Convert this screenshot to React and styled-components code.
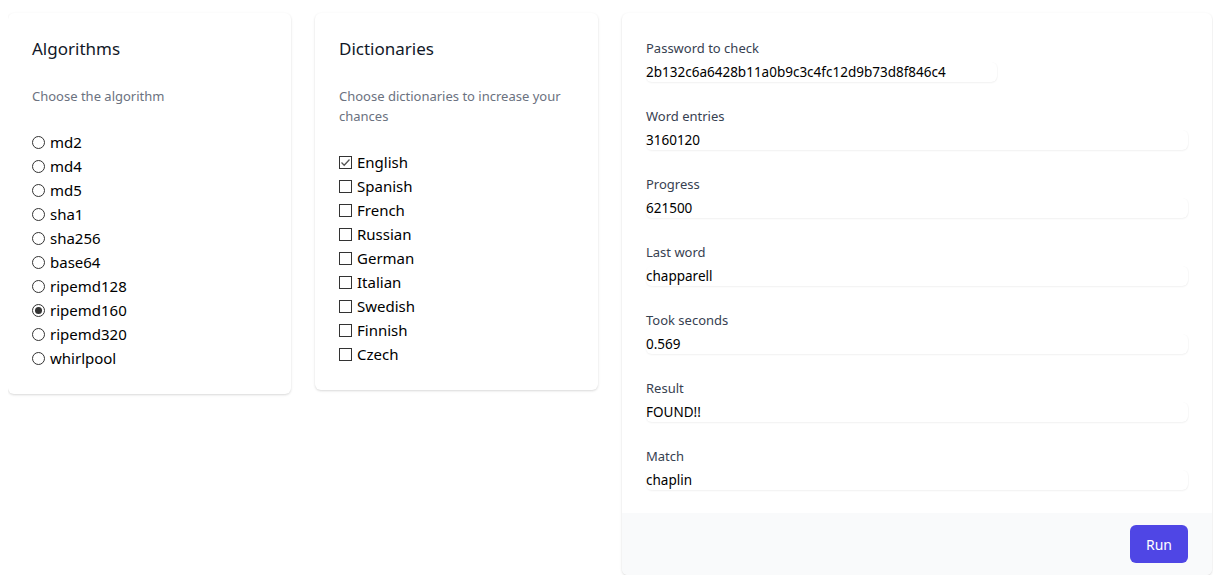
import styled, { createGlobalStyle } from "styled-components";

const GlobalStyle = createGlobalStyle`
  body {
    margin: 8px;
    font-family: "Noto Sans", "Open Sans", sans-serif;
    color: #111827;
    background: #fff;
  }
`;

// 三列布局：两张窄卡片 + 一张宽的结果卡片
const Layout = styled.div`
  display: grid;
  grid-template-columns: 283px 283px 590px;
  column-gap: 24px;
  align-items: start;
  padding-top: 5px;
`;

const Card = styled.section`
  background: #fff;
  border-radius: 6px;
  box-shadow: 0 1px 3px 0 rgba(0, 0, 0, 0.1), 0 1px 2px 0 rgba(0, 0, 0, 0.06);
  overflow: hidden;
`;

const CardBody = styled.div`
  padding: ${(p) => p.$padding || "24px"};
`;

const Title = styled.h3`
  margin: 0;
  font-size: 17px;
  line-height: 24px;
  font-weight: 400;
  color: #111827;
`;

const Hint = styled.p`
  margin: 25px 0 0;
  font-size: 13px;
  line-height: 20px;
  color: #6b7280;
`;

const OptionList = styled.div`
  margin-top: 24px;
  display: flex;
  flex-direction: column;
`;

const Option = styled.label`
  display: flex;
  align-items: center;
  gap: 5px;
  font-size: 15px;
  line-height: 24px;
  color: #000;
`;

const RadioMark = styled.span`
  box-sizing: border-box;
  width: 13px;
  height: 13px;
  border: 1px solid #333;
  border-radius: 50%;
  display: flex;
  align-items: center;
  justify-content: center;
  flex: none;

  &::after {
    content: "";
    width: 7px;
    height: 7px;
    border-radius: 50%;
    background: ${(p) => (p.$checked ? "#333" : "transparent")};
  }
`;

const CheckMark = styled.span`
  box-sizing: border-box;
  width: 13px;
  height: 13px;
  border: 1px solid #333;
  display: flex;
  align-items: center;
  justify-content: center;
  flex: none;
`;

const Fields = styled.div`
  display: flex;
  flex-direction: column;
  gap: 24px;
`;

const Field = styled.div`
  display: flex;
  flex-direction: column;
`;

const FieldLabel = styled.label`
  font-size: 13px;
  line-height: 20px;
  color: #374151;
  margin-bottom: 4px;
`;

const Value = styled.input`
  box-sizing: border-box;
  width: ${(p) => p.$width || "100%"};
  height: 20px;
  padding: 0;
  border: none;
  outline: none;
  border-radius: 6px;
  font: inherit;
  font-size: 13.5px;
  color: #000;
  background: #fff;
  box-shadow: 0 1px 2px 0 rgba(0, 0, 0, 0.06), 1px 0 1px 0 rgba(0, 0, 0, 0.02);
`;

const Footer = styled.footer`
  background: #f9fafb;
  padding: 12px 24px;
  display: flex;
  justify-content: flex-end;
`;

const RunButton = styled.button`
  height: 38px;
  padding: 0 16px;
  border: none;
  border-radius: 6px;
  background: #4f46e5;
  color: #fff;
  font: inherit;
  font-size: 14px;
  cursor: pointer;
`;

const algorithms = [
  "md2",
  "md4",
  "md5",
  "sha1",
  "sha256",
  "base64",
  "ripemd128",
  "ripemd160",
  "ripemd320",
  "whirlpool",
];

const dictionaries = [
  "English",
  "Spanish",
  "French",
  "Russian",
  "German",
  "Italian",
  "Swedish",
  "Finnish",
  "Czech",
];

const results = [
  { label: "Password to check", value: "2b132c6a6428b11a0b9c3c4fc12d9b73d8f846c4", width: "351px" },
  { label: "Word entries", value: "3160120" },
  { label: "Progress", value: "621500" },
  { label: "Last word", value: "chapparell" },
  { label: "Took seconds", value: "0.569" },
  { label: "Result", value: "FOUND!!" },
  { label: "Match", value: "chaplin" },
];

function Check({ checked }) {
  return (
    <CheckMark>
      {checked && (
        <svg width="11" height="11" viewBox="0 0 11 11">
          <path d="M1.5 5.5 L4.2 8.2 L9.5 2.5" fill="none" stroke="#555" strokeWidth="1.3" />
        </svg>
      )}
    </CheckMark>
  );
}

export default function App() {
  return (
    <>
      <GlobalStyle />
      <Layout>
        <Card>
          <CardBody>
            <Title>Algorithms</Title>
            <Hint>Choose the algorithm</Hint>
            <OptionList>
              {algorithms.map((a) => (
                <Option key={a}>
                  <RadioMark $checked={a === "ripemd160"} />
                  {a}
                </Option>
              ))}
            </OptionList>
          </CardBody>
        </Card>

        <Card>
          <CardBody>
            <Title>Dictionaries</Title>
            <Hint>Choose dictionaries to increase your chances</Hint>
            <OptionList>
              {dictionaries.map((d) => (
                <Option key={d}>
                  <Check checked={d === "English"} />
                  {d}
                </Option>
              ))}
            </OptionList>
          </CardBody>
        </Card>

        <Card>
          <CardBody $padding="25px 24px 23px">
            <Fields>
              {results.map((r) => (
                <Field key={r.label}>
                  <FieldLabel>{r.label}</FieldLabel>
                  <Value readOnly value={r.value} $width={r.width} />
                </Field>
              ))}
            </Fields>
          </CardBody>
          <Footer>
            <RunButton>Run</RunButton>
          </Footer>
        </Card>
      </Layout>
    </>
  );
}
